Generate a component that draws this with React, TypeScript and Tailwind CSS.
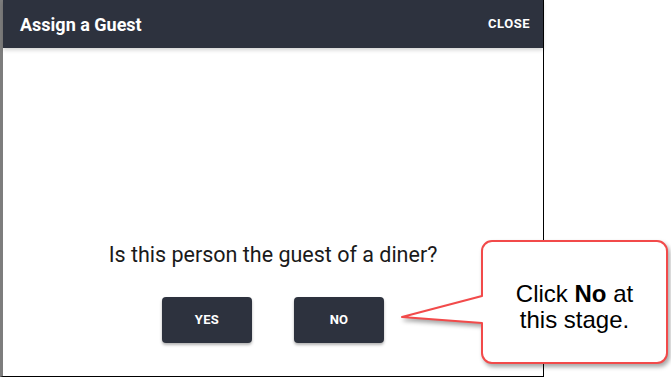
import React from 'react'

export default function App() {
    return (
        <div className="relative w-[671px] h-[377px] bg-white overflow-hidden font-['Roboto',sans-serif]">
            <div className="flex flex-col w-[544px] h-[377px] border-l-[3px] border-l-[#7d7d7d] border-r border-r-black border-b border-b-black bg-white">
                <div className="relative z-10 flex items-center justify-between h-12 pl-[17px] pr-[13px] bg-[#2d323e] shadow-[0_2px_4px_rgba(0,0,0,0.18)]">
                    <span className="text-white text-[18px] font-bold">Assign a Guest</span>
                    <span className="text-white text-[13px] font-bold tracking-[0.5px]">CLOSE</span>
                </div>
                <div className="flex-1 flex flex-col items-center justify-end pb-[33px]">
                    <p className="text-[21.5px] leading-6 text-[#1a1a1a] mb-[30px]">Is this person the guest of a diner?</p>
                    <div className="flex gap-[42px]">
                        <button className="w-[90px] h-[46px] rounded bg-[#2d323e] text-white text-[13px] font-bold tracking-[0.3px] shadow-[0_2px_3px_rgba(0,0,0,0.3)]">
                            YES
                        </button>
                        <button className="w-[90px] h-[46px] rounded bg-[#2d323e] text-white text-[13px] font-bold tracking-[0.3px] shadow-[0_2px_3px_rgba(0,0,0,0.3)]">
                            NO
                        </button>
                    </div>
                </div>
            </div>

            {/* callout */}
            <svg
                className="absolute left-[396px] top-[236px] drop-shadow-[2px_3px_2px_rgba(0,0,0,0.35)]"
                width="275"
                height="141"
                viewBox="0 0 275 141"
            >
                <path
                    d="M 96 5 H 261 A 10 10 0 0 1 271 15 V 117 A 10 10 0 0 1 261 127 H 96 A 10 10 0 0 1 86 117 V 87 L 6 81 L 86 60 V 15 A 10 10 0 0 1 96 5 Z"
                    fill="white"
                    stroke="#f24a4a"
                    strokeWidth="2"
                    strokeLinejoin="round"
                />
            </svg>
            <div className="absolute left-[482px] top-[241px] w-[185px] h-[122px] flex items-center justify-center pt-[10px]">
                <p className="text-center text-[24px] leading-[26px] text-black font-['Liberation_Sans',Arial,sans-serif]">
                    Click <b>No</b> at
                    <br />
                    this stage.
                </p>
            </div>
        </div>
    )
}
